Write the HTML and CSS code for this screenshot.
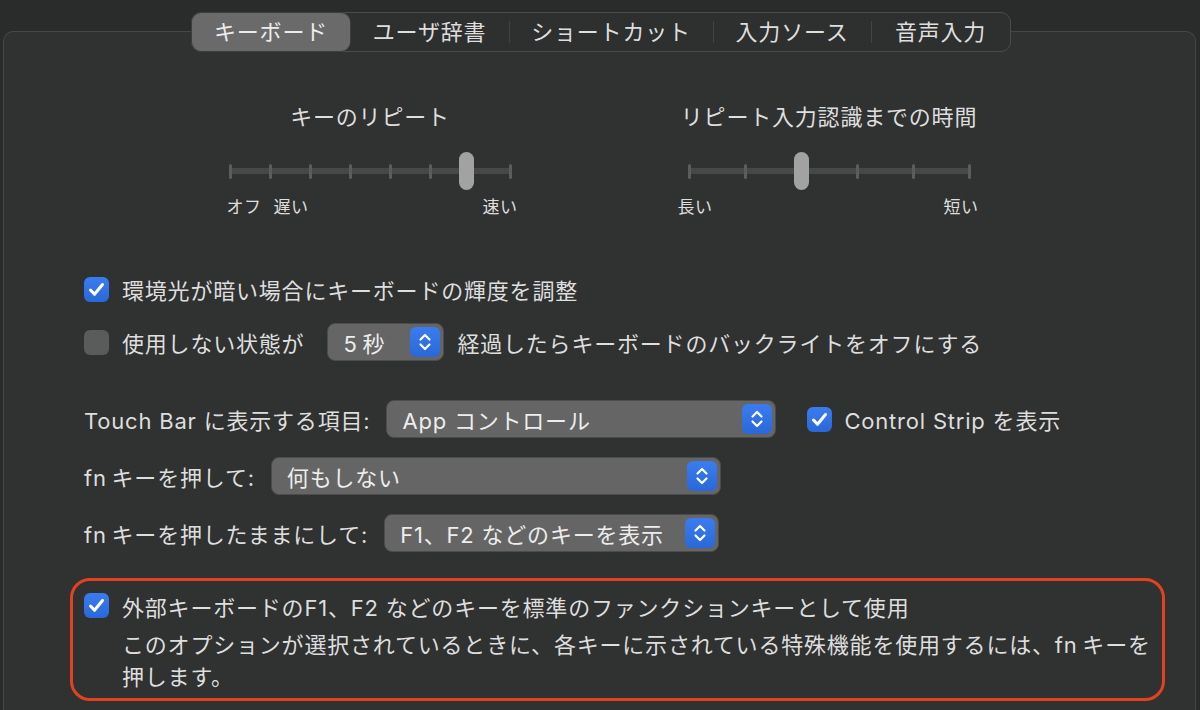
FILE: index.html
```html
<!DOCTYPE html>
<html lang="ja">
<head>
    <meta charset="UTF-8">
    <meta name="viewport" content="width=device-width, initial-scale=1.0">
    <title>キーボード</title>
    <link rel="stylesheet" href="styles.css">
</head>
<body>
    <div class="panel">
        <div class="tabbar">
            <div class="tab active" style="width: 158px">キーボード</div>
            <div class="tab" style="width: 159px">ユーザ辞書</div>
            <div class="tab sep" style="width: 204px">ショートカット</div>
            <div class="tab sep" style="width: 158px">入力ソース</div>
            <div class="tab sep" style="width: 139px">音声入力</div>
        </div>

        <div class="sliders">
            <div class="slider">
                <div class="slider-title">キーのリピート</div>
                <div class="track">
                    <span class="tick"></span><span class="tick"></span><span class="tick"></span><span class="tick"></span>
                    <span class="tick"></span><span class="tick"></span><span class="tick"></span><span class="tick"></span>
                    <span class="knob" style="left: 84.1%"></span>
                </div>
                <div class="slider-labels labels-left">
                    <span>オフ</span><span class="slow">遅い</span><span class="fill"></span><span>速い</span>
                </div>
            </div>
            <div class="slider">
                <div class="slider-title">リピート入力認識までの時間</div>
                <div class="track">
                    <span class="tick"></span><span class="tick"></span><span class="tick"></span>
                    <span class="tick"></span><span class="tick"></span><span class="tick"></span>
                    <span class="knob" style="left: 40.3%"></span>
                </div>
                <div class="slider-labels labels-right">
                    <span>長い</span><span class="fill"></span><span>短い</span>
                </div>
            </div>
        </div>

        <div class="options">
            <div class="group group-checks">
                <div class="row">
                    <span class="check on"><svg width="25" height="25" viewBox="0 0 25 25"><path d="M6.5 13 L10.5 17.3 L18.5 7.5" fill="none" stroke="#fff" stroke-width="3" stroke-linecap="round" stroke-linejoin="round"/></svg></span>
                    <span>環境光が暗い場合にキーボードの輝度を調整</span>
                </div>
                <div class="row">
                    <span class="check"></span>
                    <span>使用しない状態が</span>
                    <div class="popup popup-time">
                        <span class="popup-value">5&thinsp;秒</span>
                        <span class="stepper"><svg width="30" height="30" viewBox="0 0 30 30"><path d="M10.5 12.5 L15 8 L19.5 12.5 M10.5 17.5 L15 22 L19.5 17.5" fill="none" stroke="#fff" stroke-width="2.2" stroke-linecap="round" stroke-linejoin="round"/></svg></span>
                    </div>
                    <span class="after">経過したらキーボードのバックライトをオフにする</span>
                </div>
            </div>

            <div class="group">
                <div class="row">
                    <span>Touch Bar に表示する項目:</span>
                    <div class="popup" style="width: 390px">
                        <span class="popup-value">App コントロール</span>
                        <span class="stepper"><svg width="30" height="30" viewBox="0 0 30 30"><path d="M10.5 12.5 L15 8 L19.5 12.5 M10.5 17.5 L15 22 L19.5 17.5" fill="none" stroke="#fff" stroke-width="2.2" stroke-linecap="round" stroke-linejoin="round"/></svg></span>
                    </div>
                    <span class="check on strip"><svg width="25" height="25" viewBox="0 0 25 25"><path d="M6.5 13 L10.5 17.3 L18.5 7.5" fill="none" stroke="#fff" stroke-width="3" stroke-linecap="round" stroke-linejoin="round"/></svg></span>
                    <span>Control Strip を表示</span>
                </div>
                <div class="row">
                    <span>fn&thinsp;キーを押して:</span>
                    <div class="popup" style="width: 450px">
                        <span class="popup-value">何もしない</span>
                        <span class="stepper"><svg width="30" height="30" viewBox="0 0 30 30"><path d="M10.5 12.5 L15 8 L19.5 12.5 M10.5 17.5 L15 22 L19.5 17.5" fill="none" stroke="#fff" stroke-width="2.2" stroke-linecap="round" stroke-linejoin="round"/></svg></span>
                    </div>
                </div>
                <div class="row">
                    <span>fn&thinsp;キーを押したままにして:</span>
                    <div class="popup" style="width: 335px">
                        <span class="popup-value">F1、F2 などのキーを表示</span>
                        <span class="stepper"><svg width="30" height="30" viewBox="0 0 30 30"><path d="M10.5 12.5 L15 8 L19.5 12.5 M10.5 17.5 L15 22 L19.5 17.5" fill="none" stroke="#fff" stroke-width="2.2" stroke-linecap="round" stroke-linejoin="round"/></svg></span>
                    </div>
                </div>
            </div>

            <div class="notice">
                <div class="notice-head">
                    <span class="check on"><svg width="25" height="25" viewBox="0 0 25 25"><path d="M6.5 13 L10.5 17.3 L18.5 7.5" fill="none" stroke="#fff" stroke-width="3" stroke-linecap="round" stroke-linejoin="round"/></svg></span>
                    <span>外部キーボードのF1、F2 などのキーを標準のファンクションキーとして使用</span>
                </div>
                <div class="notice-desc">このオプションが選択されているときに、各キーに示されている特殊機能を使用するには、fn&thinsp;キーを<br>押します。</div>
            </div>
        </div>
    </div>
</body>
</html>
```

FILE: styles.css
```css
body {
    margin: 0;
    padding-top: 31px;
    height: 679px;
    overflow: hidden;
    background-color: #2a2b2b;
    color: #dedede;
    font-family: Inter, "Noto Sans CJK JP", sans-serif;
    font-size: 22px;
    letter-spacing: 0.8px;
}
.panel {
    margin: 0 4px 0 3px;
    height: 700px;
    border: 1px solid #454646;
    border-bottom: none;
    border-radius: 10px 10px 0 0;
    background-color: #303131;
}

/* tabs */
.tabbar {
    display: flex;
    width: 818px;
    height: 38px;
    margin: -20px 0 0 187px;
    border: 1px solid #4a4b4b;
    border-radius: 10px;
    background-color: #2e2f2f;
}
.tab {
    position: relative;
    height: 38px;
    line-height: 38px;
    text-align: center;
    white-space: nowrap;
}
.tab.active {
    background-color: #6a6a6a;
    border-radius: 9px;
    box-shadow: 0 0 0 1px #3c3d3d;
    color: #ececec;
}
.tab.sep::before {
    content: '';
    position: absolute;
    left: 0;
    top: 8px;
    width: 1px;
    height: 22px;
    background-color: #424343;
}

/* sliders */
.sliders {
    display: flex;
    justify-content: center;
    gap: 176px;
    margin-top: 50px;
}
.slider {
    width: 283px;
}
.slider-title {
    display: flex;
    justify-content: center;
    white-space: nowrap;
    line-height: 30px;
}
.track {
    position: relative;
    display: flex;
    justify-content: space-between;
    align-items: center;
    height: 38px;
    margin-top: 20px;
    background: linear-gradient(#474848, #474848) center / 100% 6px no-repeat;
}
.tick {
    width: 3px;
    height: 15px;
    border-radius: 1.5px;
    background-color: #5b5c5c;
}
.knob {
    position: absolute;
    top: 0;
    width: 15px;
    height: 38px;
    margin-left: -7.5px;
    border-radius: 8px;
    background-color: #a2a2a2;
}
.slider-labels {
    display: flex;
    margin-top: 6px;
    font-size: 17px;
    line-height: 22px;
    letter-spacing: 0.5px;
    white-space: nowrap;
}
.slider-labels .fill {
    flex: 1;
}
.labels-left {
    margin-left: -2px;
    margin-right: -6px;
}
.labels-left .slow {
    margin-left: 12px;
}
.labels-right {
    margin-left: -10px;
    margin-right: -8px;
}

/* option rows */
.options {
    margin-top: 52px;
    padding-left: 80px;
}
.group {
    display: flex;
    flex-direction: column;
    gap: 19px;
    margin-top: 39px;
}
.group-checks {
    gap: 15px;
    margin-top: 0;
}
.row {
    display: flex;
    align-items: center;
    height: 38px;
    white-space: nowrap;
}
.check {
    flex: none;
    width: 25px;
    height: 25px;
    margin-right: 13px;
    border-radius: 6px;
    background-color: #5a5b5b;
}
.check.on {
    background: linear-gradient(#3a7cf0, #2a68d8);
}
.check svg {
    display: block;
}
.check.strip {
    margin-left: 31px;
    margin-right: 12px;
}
.popup {
    display: flex;
    align-items: center;
    box-sizing: border-box;
    height: 38px;
    margin-left: 16px;
    padding: 0 3px 0 15px;
    border: 1px solid #4b4c4c;
    border-radius: 8px;
    background-color: #656565;
    color: #ededed;
}
.popup-time {
    width: 117px;
    margin-left: 23px;
}
.popup-value {
    flex: 1;
}
.stepper {
    width: 30px;
    height: 30px;
    border-radius: 6px;
    background: linear-gradient(#3a7cf0, #2a68d8);
}
.stepper svg {
    display: block;
}
.after {
    margin-left: 13px;
}

/* highlighted option */
.notice {
    box-sizing: border-box;
    width: 1095px;
    margin: 26px 0 0 -14px;
    padding: 8px 11px 5px;
    border: 3px solid #e24220;
    border-radius: 20px;
}
.notice-head {
    display: flex;
    align-items: center;
    height: 33px;
    white-space: nowrap;
}
.notice-desc {
    margin: 7px 0 0 38px;
    line-height: 32px;
    white-space: nowrap;
}
```
